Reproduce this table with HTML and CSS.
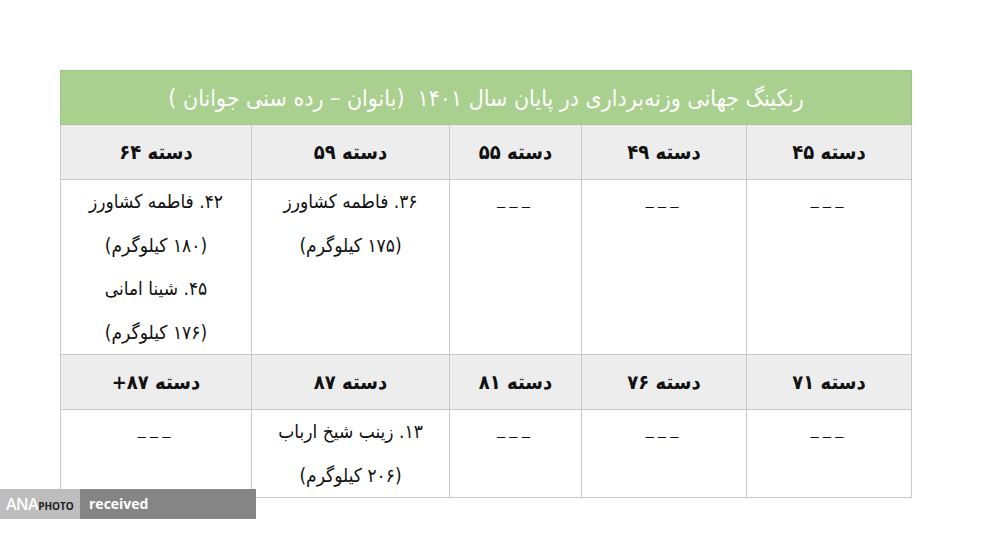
FILE: index.html
```html
<!DOCTYPE html>
<html lang="fa">
<head>
<meta charset="utf-8">
<link rel="stylesheet" href="styles.css">
</head>
<body>
<div class="page">
  <table class="rank" dir="rtl">
    <colgroup>
      <col class="c1"><col class="c2"><col class="c3"><col class="c4"><col class="c5">
    </colgroup>
    <tr class="title-row"><th colspan="5">رنکینگ جهانی وزنه‌برداری در پایان سال ۱۴۰۱&nbsp; (بانوان – رده سنی جوانان )</th></tr>
    <tr class="head-row head1">
      <th>دسته ۴۵</th><th>دسته ۴۹</th><th>دسته ۵۵</th><th>دسته ۵۹</th><th>دسته ۶۴</th>
    </tr>
    <tr class="body-row body1">
      <td><span class="dash">–––</span></td>
      <td><span class="dash">–––</span></td>
      <td><span class="dash">–––</span></td>
      <td>۳۶. فاطمه کشاورز<br>(۱۷۵ کیلوگرم)</td>
      <td>۴۲. فاطمه کشاورز<br>(۱۸۰ کیلوگرم)<br>۴۵. شینا امانی<br>(۱۷۶ کیلوگرم)</td>
    </tr>
    <tr class="head-row head2">
      <th>دسته ۷۱</th><th>دسته ۷۶</th><th>دسته ۸۱</th><th>دسته ۸۷</th><th>دسته ۸۷+</th>
    </tr>
    <tr class="body-row body2">
      <td><span class="dash">–––</span></td>
      <td><span class="dash">–––</span></td>
      <td><span class="dash">–––</span></td>
      <td>۱۳. زینب شیخ ارباب<br>(۲۰۶ کیلوگرم)</td>
      <td><span class="dash">–––</span></td>
    </tr>
  </table>
  <div class="credit"><span class="ana">ANA<small>PHOTO</small></span><span class="rec">received</span></div>
</div>
</body>
</html>
```

FILE: styles.css
```css
html, body {
  margin: 0;
  padding: 0;
  background: #ffffff;
}
.page {
  position: relative;
  width: 986px;
  height: 551px;
  padding-top: 70px;
  padding-left: 60px;
  box-sizing: border-box;
}
.rank {
  border-collapse: collapse;
  table-layout: fixed;
  width: 852px;
  font-family: "DejaVu Sans Condensed", "DejaVu Sans", "Noto Sans", sans-serif;
  color: #111111;
}
.c1 { width: 165px; }
.c2 { width: 165px; }
.c3 { width: 132px; }
.c4 { width: 198px; }
.c5 { width: 191px; }
.rank th, .rank td {
  border: 1px solid #c9c9c9;
  text-align: center;
  padding: 0;
}
.title-row th {
  background: #a9d08e;
  color: #ffffff;
  height: 53px;
  font-size: 23px;
  font-weight: normal;
  border-color: #a0c487;
}
.head-row th {
  background: #ededed;
  height: 54px;
  font-size: 20px;
  font-weight: bold;
}
.body-row td {
  vertical-align: top;
  font-size: 19px;
  line-height: 43.5px;
  padding-top: 0;
}
.body1 td { height: 172px; }
.body2 td { height: 84px; }
.dash {
  letter-spacing: 4px;
  font-family: "Liberation Sans", sans-serif;
  font-size: 15px;
  position: relative;
  top: 3px;
}
.credit {
  position: absolute;
  left: 0;
  top: 489px;
  height: 30px;
  display: flex;
  font-family: "Open Sans", "Liberation Sans", sans-serif;
}
.ana {
  width: 80px;
  background: #bdbdbd;
  color: #ffffff;
  font-size: 16px;
  font-weight: 600;
  line-height: 30px;
  padding-left: 6px;
  box-sizing: border-box;
  letter-spacing: -0.5px;
}
.ana small {
  font-size: 10px;
  font-weight: 700;
  color: #222222;
  letter-spacing: 0;
}
.rec {
  width: 176px;
  background: #858585;
  color: #ffffff;
  font-size: 14px;
  font-weight: 700;
  line-height: 30px;
  padding-left: 9px;
  box-sizing: border-box;
}
```
